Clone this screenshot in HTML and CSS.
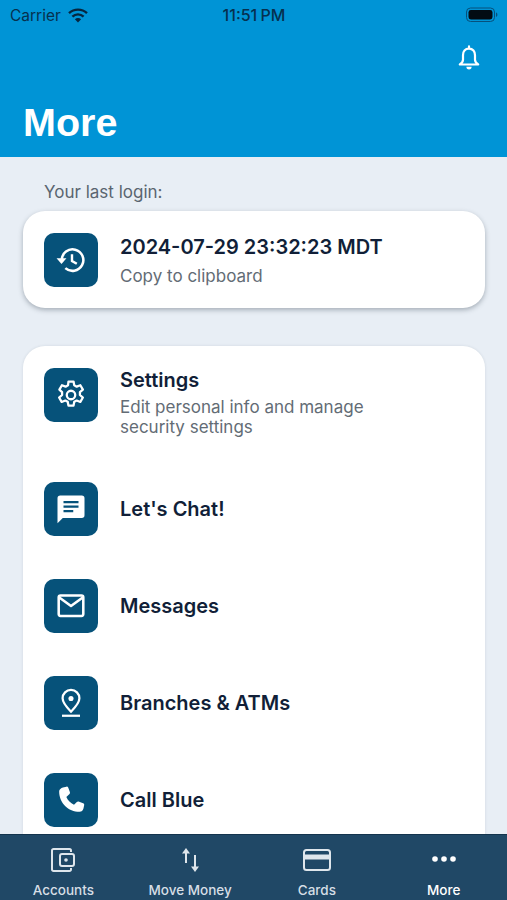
FILE: index.html
```html
<!DOCTYPE html>
<html lang="en">
<head>
  <meta charset="UTF-8">
  <meta name="viewport" content="width=device-width, initial-scale=1.0">
  <title>More</title>
  <link rel="stylesheet" href="styles.css">
</head>
<body>
  <div class="app">
    <header class="header">
      <!-- Status bar -->
      <div class="status-bar">
        <div class="status-left">
          <span>Carrier</span>
          <svg class="wifi" viewBox="0 0 20 15" width="20" height="15">
            <path d="M1 5.2a13 13 0 0 1 18 0" fill="none" stroke="#06263f" stroke-width="2.4"/>
            <path d="M4.4 8.6a8.2 8.2 0 0 1 11.2 0" fill="none" stroke="#06263f" stroke-width="2.4"/>
            <path d="M10 14.4 6.9 11.2a4.4 4.4 0 0 1 6.2 0z" fill="#06263f"/>
          </svg>
        </div>
        <div class="status-time">11:51 PM</div>
        <div class="status-right">
          <svg viewBox="0 0 32 16" width="32" height="16">
            <rect x="0.5" y="1" width="28" height="13.5" rx="4" fill="none" stroke="#06507c" stroke-width="1"/>
            <rect x="2.5" y="3" width="24" height="9.5" rx="2.4" fill="#020c14"/>
            <path d="M30 5.5c1 .4 1.4 1.2 1.4 2.2s-.4 1.8-1.4 2.2z" fill="#06507c"/>
          </svg>
        </div>
      </div>
      <div class="header-actions">
        <svg viewBox="0 0 24 28" width="24" height="28">
          <path d="M12 2.400v2.200M12 4.600c-3.900 0-6 3-6 6.600v4.600c0 2-1.200 3.400-3.200 4.700h18.400c-2-1.300-3.200-2.700-3.200-4.700v-4.600c0-3.600-2.100-6.600-6-6.600z" fill="none" stroke="#fff" stroke-width="2.200" stroke-linejoin="round" stroke-linecap="round"/>
          <path d="M9.400 22.800h5.200a2.600 2.600 0 0 1-5.200 0z" fill="#fff"/>
        </svg>
      </div>
      <h1 class="title">More</h1>
    </header>

    <main class="content">
      <p class="last-login">Your last login:</p>

      <section class="card login-card">
        <div class="row">
          <div class="icon-box">
            <svg viewBox="0 0 24 24" width="34" height="34" fill="none" stroke="#fff" stroke-width="1.800">
              <path d="M5.500 12a7.600 7.600 0 1 1 2.500 5.700"/>
              <path d="M1.800 10.800h7L5.300 14.800z" fill="#fff" stroke="none"/>
              <path d="M12.700 8v4.700l3.400 2" stroke-width="1.700"/>
            </svg>
          </div>
          <div class="row-text">
            <div class="row-title">2024-07-29 23:32:23 MDT</div>
            <div class="row-sub">Copy to clipboard</div>
          </div>
        </div>
      </section>

      <section class="card menu-card">
        <div class="row row-settings">
          <div class="icon-box">
            <svg viewBox="0 0 24 24" width="34" height="34" fill="none" stroke="#fff" stroke-width="1.600" stroke-linejoin="round">
              <path d="M10.200 2.500h3.600l.5 2.700 1.700.9 2.600-1 1.800 3.100-2.100 1.800v2l2.100 1.800-1.800 3.100-2.600-1-1.700.9-.5 2.700h-3.600l-.5-2.700-1.700-.9-2.600 1-1.800-3.100 2.100-1.800v-2L3.800 8.200l1.800-3.100 2.600 1 1.700-.9z"/>
              <circle cx="12" cy="12" r="3"/>
            </svg>
          </div>
          <div class="row-text">
            <div class="row-title">Settings</div>
            <div class="row-sub">Edit personal info and manage<br>security settings</div>
          </div>
        </div>

        <div class="row">
          <div class="icon-box">
            <svg viewBox="0 0 24 24" width="36" height="36">
              <path d="M4.800 3h14.400A1.800 1.800 0 0 1 21 4.800v11.400a1.800 1.800 0 0 1-1.800 1.800H6.500L3 21.500V4.800A1.800 1.800 0 0 1 4.800 3z" fill="#fff"/>
              <path d="M7 7.400h10M7 10.400h10M7 13.400h6.500" stroke="#06527a" stroke-width="1.500"/>
            </svg>
          </div>
          <div class="row-text">
            <div class="row-title">Let's Chat!</div>
          </div>
        </div>

        <div class="row">
          <div class="icon-box">
            <svg viewBox="0 0 24 24" width="36" height="36" fill="none" stroke="#fff" stroke-width="1.700" stroke-linejoin="round">
              <rect x="3.800" y="5" width="16.400" height="13.600" rx="1.200"/>
              <path d="M4.200 6.300 12 12l7.800-5.700"/>
            </svg>
          </div>
          <div class="row-text">
            <div class="row-title">Messages</div>
          </div>
        </div>

        <div class="row">
          <div class="icon-box">
            <svg viewBox="0 0 24 24" width="36" height="36" fill="none" stroke="#fff" stroke-width="1.500">
              <path d="M12 17.800c-3.300-3.300-5.600-6-5.600-8.900a5.600 5.600 0 0 1 11.200 0c0 2.900-2.300 5.600-5.600 8.900z"/>
              <circle cx="12" cy="9" r="1.700" fill="#fff" stroke="none"/>
              <path d="M6 20.500h12"/>
            </svg>
          </div>
          <div class="row-text">
            <div class="row-title">Branches &amp; ATMs</div>
          </div>
        </div>

        <div class="row">
          <div class="icon-box">
            <svg viewBox="0 0 24 24" width="36" height="36">
              <path d="M6.600 3.600 9 3.100c.5-.1 1 .2 1.200.7l1.100 3.100c.1.400 0 .8-.3 1.100L8.900 10c1 2.300 2.800 4.100 5.100 5.100l1.900-1.800c.3-.3.700-.4 1.100-.3l3.100 1.100c.5.200.8.700.7 1.200l-.5 2.400c-.3 1.300-1.300 2.200-2.600 2.200C10.200 19.900 4.100 13.800 4.100 6.300c0-1.400 1.300-2.400 2.500-2.700z" fill="#fff"/>
            </svg>
          </div>
          <div class="row-text">
            <div class="row-title">Call Blue</div>
          </div>
        </div>
      </section>
    </main>

    <!-- Bottom tabs -->
    <nav class="tabbar">
      <div class="tab">
        <svg viewBox="0 0 28 28" width="28" height="28" fill="none" stroke="#dfe6ec" stroke-width="2">
          <path d="M22 6V4.500A1.500 1.500 0 0 0 20.500 3H4.500A1.500 1.500 0 0 0 3 4.500v19A1.500 1.500 0 0 0 4.500 25h16a1.500 1.500 0 0 0 1.500-1.500V22"/>
          <rect x="11" y="8" width="14" height="12" rx="2"/>
          <circle cx="17" cy="14" r="1.800" fill="#dfe6ec" stroke="none"/>
        </svg>
        <span>Accounts</span>
      </div>
      <div class="tab">
        <svg viewBox="0 0 28 28" width="28" height="28" fill="none" stroke="#dfe6ec" stroke-width="2">
          <path d="M10 6v11M19 9v13"/>
          <path d="M6 7.500 10 2l4 5.500z" fill="#dfe6ec" stroke="none"/>
          <path d="M15 20.500h8L19 26z" fill="#dfe6ec" stroke="none"/>
        </svg>
        <span>Move Money</span>
      </div>
      <div class="tab">
        <svg viewBox="0 0 28 28" width="28" height="28" fill="none" stroke="#dfe6ec" stroke-width="2">
          <rect x="1" y="4" width="26" height="20" rx="2.500"/>
          <rect x="1" y="8.500" width="26" height="5" fill="#dfe6ec" stroke="none"/>
        </svg>
        <span>Cards</span>
      </div>
      <div class="tab tab-active">
        <svg viewBox="0 0 28 28" width="28" height="28" fill="#fff">
          <circle cx="5" cy="13" r="2.800"/>
          <circle cx="14" cy="13" r="2.800"/>
          <circle cx="23" cy="13" r="2.800"/>
        </svg>
        <span>More</span>
      </div>
    </nav>
  </div>
</body>
</html>
```

FILE: styles.css
```css
* {
  box-sizing: border-box;
}
body {
  margin: 0;
  font-family: Inter, "Liberation Sans", sans-serif;
}
.app {
  display: flex;
  flex-direction: column;
  height: 900px;
  overflow: hidden;
  background-color: #e8eef5;
}

/* Header */
.header {
  flex: none;
  height: 157px;
  padding: 0 9px 0 10px;
  background-color: #0094d6;
}
.status-bar {
  display: grid;
  grid-template-columns: 1fr auto 1fr;
  align-items: center;
  height: 30px;
  color: #06304f;
  font-size: 15.5px;
}
.status-left {
  display: flex;
  align-items: center;
  gap: 7px;
}
.status-time {
  font-size: 16px;
  font-weight: 500;
  word-spacing: -1px;
}
.status-right {
  display: flex;
  justify-content: flex-end;
}
.header-actions {
  display: flex;
  justify-content: flex-end;
  height: 36px;
  margin-top: 14px;
  padding-right: 17px;
}
.title {
  margin: 20px 0 0 13px;
  color: #fff;
  font-family: "Liberation Sans", Arial, sans-serif;
  font-size: 39.5px;
  font-weight: 700;
  line-height: 44px;
}

/* Content */
.content {
  flex: 1;
  min-height: 0;
  padding: 0 22px 0 23px;
}
.last-login {
  margin: 25px 0 8px 21px;
  color: #5a6570;
  font-size: 17px;
  line-height: 21px;
}
.card {
  background-color: #fff;
  border-radius: 22px;
}
.login-card {
  height: 97px;
  padding: 22px 21px;
  box-shadow: 0 2px 5px rgba(40, 55, 70, 0.35);
}
.menu-card {
  margin-top: 38px;
  padding: 22px 21px;
  box-shadow: 0 0 3px rgba(40, 55, 70, 0.12);
}
.row {
  display: flex;
  align-items: center;
  gap: 22px;
  margin-bottom: 43px;
}
.login-card .row {
  margin-bottom: 0;
}
.row-settings {
  align-items: flex-start;
  margin-bottom: 45px;
}
.icon-box {
  display: flex;
  flex: none;
  align-items: center;
  justify-content: center;
  width: 54px;
  height: 54px;
  background-color: #06527a;
  border-radius: 10px;
}
.row-title {
  color: #111f38;
  font-size: 20px;
  font-weight: 600;
  line-height: 25px;
}
.row-sub {
  margin-top: 4px;
  color: #636c75;
  font-size: 17px;
  line-height: 20px;
}
.login-card .row-sub {
  margin-top: 6px;
}

/* Bottom tabs */
.tabbar {
  display: grid;
  flex: none;
  grid-template-columns: repeat(4, 1fr);
  height: 66px;
  padding-top: 11px;
  background-color: #204866;
  border-top: 1px solid #14344d;
}
.tab {
  display: flex;
  flex-direction: column;
  align-items: center;
  gap: 8px;
  color: #d6dee5;
  font-size: 13.5px;
  font-weight: 500;
}
.tab-active {
  color: #fff;
}
```
